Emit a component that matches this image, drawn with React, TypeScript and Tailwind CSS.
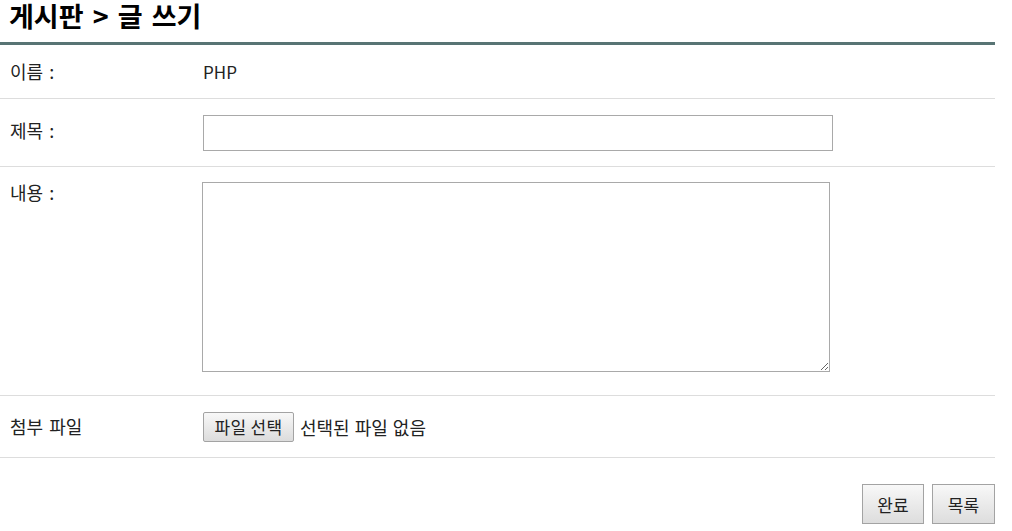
import React from "react";

const font = { fontFamily: '"Noto Sans CJK KR", "Noto Sans", sans-serif' };

export default function App() {
  return (
    <div className="w-[995px] bg-white text-[#222]" style={font}>
      <div className="h-[42px] pl-[9px] flex items-center pb-[10px]">
        <h1 className="text-[27px] font-bold leading-[30px] text-black [word-spacing:3px]">게시판 &gt; 글 쓰기</h1>
      </div>
      <div className="border-b-[3px] border-[#587474]" />

      <div className="flex items-center h-[54px] border-b border-[#dddddd]">
        <div className="w-[203px] pl-[10px] text-[18px] leading-[20px] pb-[2px] [word-spacing:2px]">이름 :</div>
        <div className="text-[17px] leading-[20px]">PHP</div>
      </div>

      <div className="flex items-center h-[68px] border-b border-[#dddddd]">
        <div className="w-[203px] pl-[10px] text-[18px] leading-[20px] pb-[5px] [word-spacing:2px]">제목 :</div>
        <input
          type="text"
          className="w-[630px] h-[36px] border border-[#a9a9a9] outline-none px-2 text-[16px]"
        />
      </div>

      <div className="flex h-[229px] border-b border-[#dddddd] pt-[15px]">
        <div className="w-[202px] pl-[10px] text-[18px] leading-[20px] [word-spacing:2px]">내용 :</div>
        <textarea className="w-[628px] h-[190px] border border-[#a9a9a9] outline-none resize p-1 text-[16px] block" />
      </div>

      <div className="flex items-center h-[62px] border-b border-[#dddddd]">
        <div className="w-[203px] pl-[10px] text-[18px] leading-[20px] pb-[2px] [word-spacing:2px]">첨부 파일</div>
        <div className="flex items-center">
          <button className="h-[30px] w-[91px] border border-[#a3a3a3] rounded-[2px] bg-gradient-to-b from-[#f8f8f8] to-[#dcdcdc] text-[17px] leading-none text-[#222] flex items-center justify-center tracking-[0.3px]">
            파일 선택
          </button>
          <span className="ml-[6px] text-[18px] leading-none [word-spacing:1px]">선택된 파일 없음</span>
        </div>
      </div>

      <div className="flex justify-end gap-[8px] mt-[26px]">
        <button className="w-[62px] h-[40px] border border-[#a3a3a3] bg-gradient-to-b from-[#f8f8f8] to-[#dddddd] text-[17px] leading-none text-[#222] flex items-center justify-center">
          완료
        </button>
        <button className="w-[63px] h-[40px] border border-[#a3a3a3] bg-gradient-to-b from-[#f8f8f8] to-[#dddddd] text-[17px] leading-none text-[#222] flex items-center justify-center">
          목록
        </button>
      </div>
    </div>
  );
}
